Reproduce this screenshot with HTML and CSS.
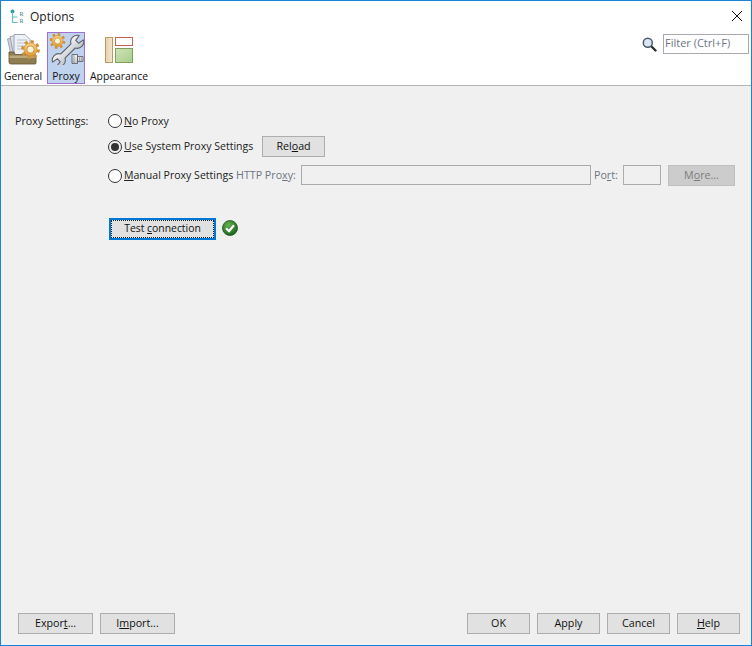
FILE: index.html
```html
<!DOCTYPE html>
<html lang="en">
<head>
<meta charset="utf-8">
<title>Options</title>
<link rel="stylesheet" href="styles.css">
</head>
<body>
<svg class="defs" width="0" height="0" aria-hidden="true">
  <defs>
    <linearGradient id="gearFill" x1="0" y1="0" x2="0" y2="1">
      <stop offset="0" stop-color="#f8d288"/>
      <stop offset="1" stop-color="#e39c38"/>
    </linearGradient>
    <linearGradient id="steel" x1="0" y1="0" x2="0" y2="1">
      <stop offset="0" stop-color="#f4f5f6"/>
      <stop offset="1" stop-color="#bfc3c8"/>
    </linearGradient>
    <symbol id="gear" viewBox="0 0 20 20">
      <circle cx="10" cy="10" r="8.200" fill="none" stroke="#cf9238" stroke-width="3.400" stroke-dasharray="3.200 3.240"/>
      <circle cx="10" cy="10" r="7" fill="url(#gearFill)" stroke="#bf8428" stroke-width=".6"/>
      <circle cx="10" cy="10" r="3.800" fill="#fdf3d8" stroke="#bf8428" stroke-width=".8"/>
    </symbol>
  </defs>
</svg>
<div class="window">
  <header class="titlebar">
    <svg class="app-icon" width="14" height="15" viewBox="0 0 14 15">
      <circle cx="2.500" cy="2.500" r="2" fill="#2a9d9d"/>
      <path d="M2.500 3v10.500h5M2.500 8h5" fill="none" stroke="#63c0c0" stroke-width="1.200"/>
      <text x="9.500" y="7" class="app-r">R</text>
      <text x="9.500" y="13.500" class="app-r">R</text>
    </svg>
    <span class="title">Options</span>
    <svg class="close" width="10" height="10" viewBox="0 0 10 10">
      <path d="M0 0l10 10M10 0L0 10" stroke="#111" stroke-width="1" fill="none"/>
    </svg>
  </header>
  <nav class="toolbar">
    <div class="tab tab-general">
      <svg class="tab-icon" width="34" height="32" viewBox="0 0 34 32">
        <path d="M1.500 6l9-2 4 22H6z" fill="#cdd3de" stroke="#8a93a3" stroke-width=".8"/>
        <path d="M4 3.500l9-1.500 3 22H8z" fill="#dfe3ea" stroke="#8a93a3" stroke-width=".8"/>
        <path d="M8 1.500h11l5 5v19H8z" fill="#eef1f6" stroke="#8a93a3" stroke-width=".8"/>
        <path d="M11 7h10M11 10h10M11 13h10M11 16h6" stroke="#aeb5c2" stroke-width=".8"/>
        <path d="M3 19l5 0 1 2.500h19l2 .5v8a1 1 0 0 1-1 1H5a2 2 0 0 1-2-2z" fill="#8f7d52" stroke="#5f5232" stroke-width=".8"/>
        <path d="M3.500 22.500h26v2.500h-26z" fill="#b9a87b"/>
        <use href="#gear" x="15" y="7" width="19" height="19"/>
      </svg>
      <span class="tab-label">General</span>
    </div>
    <div class="tab tab-proxy is-active">
      <svg class="tab-icon" width="36" height="32" viewBox="0 0 36 32">
        <use href="#gear" x="1.500" y="0" width="16" height="16"/>
        <path transform="translate(20 18) rotate(-45)" d="M-7.230-3H7.230A6.500 6.500 0 0 1 18.770-3L13-2V2L18.770 3A6.500 6.500 0 0 1 7.230 3H-7.230A6.500 6.500 0 0 1-18.770 3L-13 2V-2L-18.770-3A6.500 6.500 0 0 1-7.230-3Z" fill="url(#steel)" stroke="#5f646a" stroke-width="1.100" stroke-linejoin="round"/>
        <path d="M24 21.500h5.500v9H24z" fill="url(#steel)" stroke="#5f646a" stroke-width=".9"/>
        <path d="M29.500 23.500h5.500v5h-5.500z" fill="url(#steel)" stroke="#5f646a" stroke-width=".9"/>
        <path d="M26 21.500v9M31.500 23.500v5M33.300 23.500v5" stroke="#8a8e94" stroke-width=".7"/>
      </svg>
      <span class="tab-label">Proxy</span>
    </div>
    <div class="tab tab-appearance">
      <svg class="tab-icon" width="28" height="32" viewBox="0 0 28 32">
        <defs>
          <linearGradient id="barFill" x1="0" y1="0" x2="1" y2="0">
            <stop offset="0" stop-color="#e8d3b0"/>
            <stop offset="1" stop-color="#f3e6d0"/>
          </linearGradient>
          <linearGradient id="greenFill" x1="0" y1="0" x2="1" y2="1">
            <stop offset="0" stop-color="#cfe3b8"/>
            <stop offset="1" stop-color="#a9cd8b"/>
          </linearGradient>
        </defs>
        <rect x=".5" y="4.500" width="7" height="25" fill="url(#barFill)" stroke="#bb9a5e"/>
        <rect x="10.500" y="4.500" width="17" height="8" fill="#fff" stroke="#c8604f"/>
        <rect x="10.500" y="15.500" width="17" height="14" fill="url(#greenFill)" stroke="#7fa05a"/>
      </svg>
      <span class="tab-label">Appearance</span>
    </div>
    <div class="filter">
      <svg width="15" height="15" viewBox="0 0 15 15">
        <path d="M9 9l4.500 4.500" stroke="#2c2f33" stroke-width="2.400" stroke-linecap="round"/>
        <circle cx="5.800" cy="5.800" r="4.500" fill="#dbe6f2" stroke="#4a5a6a" stroke-width="1.500"/>
      </svg>
      <div class="filter-box">Filter (Ctrl+F)</div>
    </div>
  </nav>
  <main class="content">
    <div class="proxy-form">
      <div class="form-label">Proxy Settings:</div>
      <div class="form-rows">
        <div class="row row-plain">
          <span class="radio"></span>
          <span class="row-text"><u>N</u>o Proxy</span>
        </div>
        <div class="row row-system">
          <span class="radio is-checked"></span>
          <span class="row-text system-label"><u>U</u>se System Proxy Settings</span>
          <button class="btn btn-reload">Rel<u>o</u>ad</button>
        </div>
        <div class="row row-manual">
          <span class="radio"></span>
          <span class="row-text manual-label"><u>M</u>anual Proxy Settings</span>
          <span class="row-text muted http-label">HTTP Pro<u>x</u>y:</span>
          <div class="field field-host"></div>
          <span class="row-text muted port-label">Po<u>r</u>t:</span>
          <div class="field field-port"></div>
          <button class="btn btn-more">M<u>o</u>re...</button>
        </div>
        <div class="row row-test">
          <button class="btn btn-test"><span class="focus-ring">Test <u>c</u>onnection</span></button>
          <svg class="ok-icon" width="16" height="16" viewBox="0 0 16 16">
            <defs>
              <radialGradient id="okFill" cx=".4" cy=".3" r=".8">
                <stop offset="0" stop-color="#62b052"/>
                <stop offset="1" stop-color="#125c12"/>
              </radialGradient>
            </defs>
            <circle cx="8" cy="8" r="7.500" fill="url(#okFill)" stroke="#1a551a" stroke-width=".8"/>
            <path d="M4 8.200l3 3 5-6" fill="none" stroke="#fff" stroke-width="2.200"/>
          </svg>
        </div>
      </div>
    </div>
    <footer class="footer">
      <button class="btn btn-wide">Expor<u>t</u>...</button>
      <button class="btn btn-wide">I<u>m</u>port...</button>
      <div class="footer-spacer"></div>
      <button class="btn btn-std">OK</button>
      <button class="btn btn-std">Apply</button>
      <button class="btn btn-std">Cancel</button>
      <button class="btn btn-std"><u>H</u>elp</button>
    </footer>
  </main>
</div>
</body>
</html>
```
FILE: styles.css
```css
* { box-sizing: border-box; }
html, body { margin: 0; padding: 0; }
body {
  width: 752px;
  height: 646px;
  overflow: hidden;
  font-family: "Open Sans", "Noto Sans", sans-serif;
  font-size: 10.7px;
  color: #222;
}
.defs { display: block; height: 0; }
.window {
  width: 752px;
  height: 646px;
  display: flex;
  flex-direction: column;
  border: 1px solid #1883d7;
  background: #fff;
}
.titlebar {
  height: 31px;
  flex: none;
  display: flex;
  align-items: center;
  padding: 0 10px 1px 9px;
}
.app-icon { margin-right: 6px; }
.app-r { font-family: "Liberation Serif", serif; font-size: 6px; fill: #2f8585; }
.title { font-size: 12px; color: #1a1a1a; }
.close { margin-left: auto; margin-right: -1px; }
.toolbar {
  height: 53px;
  flex: none;
  display: flex;
  align-items: flex-start;
  padding-left: 1px;
}
.tab {
  height: 52px;
  display: flex;
  flex-direction: column;
  align-items: center;
  border: 1px solid transparent;
}
.tab-general { width: 42px; margin-right: 3px; }
.tab-proxy { width: 38px; margin-right: 4px; }
.tab-appearance { width: 60px; }
.tab.is-active { background: #bfd2ee; border-color: #a070cf; }
.tab-icon { flex: none; margin-left: -2px; margin-right: -2px; }
.tab-label { color: #111; font-size: 10.4px; margin-top: 4px; line-height: 15px; height: 15px; white-space: nowrap; }
.filter {
  margin-left: auto;
  margin-right: 2px;
  margin-top: 2px;
  display: flex;
  align-items: center;
  gap: 6px;
}
.filter-box {
  width: 86px;
  height: 20px;
  border: 1px solid #a8a8b0;
  background: #fff;
  padding-left: 1px;
  font-size: 11px;
  line-height: 16px;
  color: #6b7688;
  white-space: nowrap;
  overflow: hidden;
}
.content {
  flex: 1;
  min-height: 0;
  display: flex;
  flex-direction: column;
  background: #f0f0f0;
  border-top: 1px solid #b4b4b4;
}
.proxy-form {
  display: flex;
  padding: 25px 0 0 14px;
}
.form-label { width: 92px; flex: none; line-height: 20px; }
.form-rows { flex: 1; min-width: 0; display: flex; flex-direction: column; }
.row { display: flex; align-items: center; white-space: nowrap; }
.row-plain { height: 20px; }
.row-system { height: 21px; margin-top: 5px; }
.row-manual { height: 21px; margin-top: 8px; }
.row-test { height: 22px; margin-top: 32px; padding-left: 2px; }
.row-text { padding-bottom: 1px; font-size: 10.55px; }
.radio {
  flex: none;
  width: 14px;
  height: 14px;
  margin: 0 2px 0 1px;
  border: 1px solid #333;
  border-radius: 50%;
  background: #fff;
  display: flex;
  align-items: center;
  justify-content: center;
}
.radio.is-checked { background: #f0f0f0; }
.radio.is-checked::after {
  content: "";
  width: 8px;
  height: 8px;
  border-radius: 50%;
  background: #333;
}
.btn {
  font: inherit;
  color: #111;
  height: 21px;
  padding: 0 0 1px;
  background: #e1e1e1;
  border: 1px solid #adadad;
  white-space: nowrap;
}
.btn-reload { width: 63px; margin-left: 8px; }
.system-label { width: 130px; }
.manual-label { width: 107px; }
.muted { color: #6d7583; font-size: 10.7px; }
.http-label { width: 65px; margin-left: 5px; }
.field { height: 20px; margin-top: -1px; border: 1px solid #ababab; background: #f0f0f0; flex: none; }
.field-host { width: 290px; }
.port-label { width: 32px; padding-left: 3px; }
.field-port { width: 38px; }
.btn-more { width: 67px; margin-left: 7px; background: #cccccc; border-color: #bfbfbf; color: #7c7c7c; }
.btn-test {
  width: 107px;
  height: 22px;
  border: 2px solid #0078d7;
  padding: 0;
  display: block;
  font-size: 10.4px;
}
.focus-ring {
  display: block;
  height: 100%;
  line-height: 15px;
  border: 1px dotted #222;
}
.ok-icon { margin: 0 0 2px 6px; }
.footer {
  margin-top: auto;
  display: flex;
  gap: 7px;
  padding: 0 11px 11px 17px;
}
.footer-spacer { flex: 1; }
.btn-wide { width: 75px; }
.btn-std { width: 63px; }
```
